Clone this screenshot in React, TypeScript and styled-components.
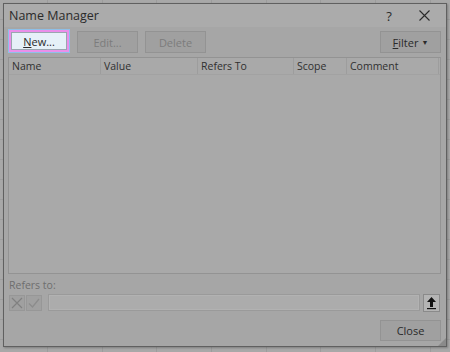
import React from "react";
import styled, { createGlobalStyle } from "styled-components";

const Global = createGlobalStyle`
  html, body { margin: 0; padding: 0; }
  body {
    width: 450px;
    height: 352px;
    overflow: hidden;
    font-family: "Open Sans", "Noto Sans", "Liberation Sans", sans-serif;
    background-color: #a8a8a8;
    background-image:
      repeating-linear-gradient(90deg, transparent 0 47px, #9c9c9c 47px 48px, transparent 48px 54.7px),
      repeating-linear-gradient(180deg, transparent 0 19px, #9e9e9e 19px 20px);
  }
`;

const Page = styled.div`
  width: 450px;
  height: 352px;
  box-sizing: border-box;
  padding: 3px 3px 5px 3px;
  display: flex;
`;

const Dialog = styled.div`
  flex: 1;
  position: relative;
  display: flex;
  flex-direction: column;
  background: #a6a6a6;
  border: 1px solid #606060;
  box-shadow: 1px 1px 2px rgba(0, 0, 0, 0.25);
`;

const TitleBar = styled.div`
  height: 23px;
  display: flex;
  align-items: center;
  padding-left: 5px;
  background: #ababab;
`;

const Title = styled.div`
  flex: 1;
  font-size: 12.5px;
  color: #2a2a2a;
`;

const TitleIcon = styled.div<{ $w: number }>`
  width: ${(p) => p.$w}px;
  display: flex;
  align-items: center;
  justify-content: center;
  color: #2a2a2a;
  font-size: 13px;
`;

const Body = styled.div`
  flex: 1;
  display: flex;
  flex-direction: column;
  padding: 2px 5px 5px 4px;
`;

const Toolbar = styled.div`
  display: flex;
  align-items: center;
  height: 24px;
  gap: 6px;
`;

const Button = styled.div<{ $focus?: boolean; $disabled?: boolean }>`
  box-sizing: border-box;
  width: ${(p) => (p.$focus ? 62 : 61)}px;
  height: ${(p) => (p.$focus ? 24 : 22)}px;
  display: flex;
  align-items: center;
  justify-content: center;
  font-size: 11px;
  color: ${(p) => (p.$disabled ? "#7c7c7c" : "#2a2a2a")};
  background: ${(p) => (p.$focus ? "#e6f0f8" : "#a0a0a0")};
  border: 1px solid ${(p) => (p.$focus ? "#8ec0e8" : "#939393")};
  outline: ${(p) => (p.$focus ? "2px solid #ea8fea" : "none")};
  outline-offset: ${(p) => (p.$focus ? "-3px" : "0")};
  box-shadow: ${(p) => (p.$focus ? "inset 0 0 0 2px #e6f0f8, inset 0 0 0 3px #9aa6b0" : "none")};
  margin-top: ${(p) => (p.$focus ? "0" : "2px")};
  margin-left: ${(p) => (p.$focus ? "0" : "1px")};
`;

const Spacer = styled.div`
  flex: 1;
`;

const Caret = styled.span`
  font-size: 7px;
  margin-left: 3px;
`;

const List = styled.div`
  margin-top: 4px;
  height: 217px;
  box-sizing: border-box;
  border: 1px solid #939393;
  background: #a9a9a9;
  display: flex;
  flex-direction: column;
`;

const HeaderRow = styled.div`
  display: grid;
  grid-template-columns: 92px 97px 96px 53px 1fr;
  height: 16px;
  border-bottom: 1px solid #a2a2a2;
`;

const HeaderCell = styled.div`
  font-size: 10.5px;
  color: #303030;
  display: flex;
  align-items: center;
  padding-left: 3px;
  border-right: 1px solid #9d9d9d;
  &:last-child { margin-right: 1px; }
`;

const RefLabel = styled.div`
  margin-top: 5px;
  font-size: 10.5px;
  color: #6e6e6e;
  padding-left: 1px;
  height: 13px;
  line-height: 13px;
`;

const RefRow = styled.div`
  margin-top: 1px;
  display: flex;
  align-items: center;
  height: 19px;
`;

const SmallBtn = styled.div`
  width: 14px;
  height: 14px;
  margin-left: 1px;
  background: #a0a0a0;
  border: 1px solid #979797;
  display: flex;
  align-items: center;
  justify-content: center;
`;

const RefInput = styled.div`
  flex: 1;
  height: 17px;
  box-sizing: border-box;
  margin-left: 6px;
  border: 1px solid #9a9a9a;
  background: #acacac;
  box-shadow: inset 0 0 0 1px #b2b2b2;
`;

const Collapse = styled.div`
  width: 17px;
  height: 18px;
  box-sizing: border-box;
  margin-left: 3px;
  margin-right: 1px;
  border: 1px solid #8a8a8a;
  background: #b4b4b4;
  display: flex;
  align-items: center;
  justify-content: center;
`;

const Footer = styled.div`
  margin-top: auto;
  display: flex;
  justify-content: flex-end;
`;

const CloseBtn = styled(Button)`
  height: 21px;
  margin-top: 0;
`;

const Grip = styled.svg`
  position: absolute;
  right: 0;
  bottom: 0;
`;

export default function App() {
  return (
    <>
      <Global />
      <Page>
        <Dialog>
          <TitleBar>
            <Title>Name Manager</Title>
            <TitleIcon $w={26}>?</TitleIcon>
            <TitleIcon $w={44}>
              <svg width="11" height="11" viewBox="0 0 11 11">
                <path d="M0.5 0.5 L10.5 10.5 M10.5 0.5 L0.5 10.5" stroke="#2a2a2a" strokeWidth="1.1" />
              </svg>
            </TitleIcon>
          </TitleBar>
          <Body>
            <Toolbar>
              <Button $focus>
                <span><u>N</u>ew...</span>
              </Button>
              <Button $disabled>Edit...</Button>
              <Button $disabled>Delete</Button>
              <Spacer />
              <Button>
                <u>F</u>ilter<Caret>▼</Caret>
              </Button>
            </Toolbar>
            <List>
              <HeaderRow>
                <HeaderCell>Name</HeaderCell>
                <HeaderCell>Value</HeaderCell>
                <HeaderCell>Refers To</HeaderCell>
                <HeaderCell>Scope</HeaderCell>
                <HeaderCell>Comment</HeaderCell>
              </HeaderRow>
            </List>
            <RefLabel>Refers to:</RefLabel>
            <RefRow>
              <SmallBtn>
                <svg width="12" height="12" viewBox="0 0 12 12">
                  <path d="M1 1 L11 11 M11 1 L1 11" stroke="#808080" strokeWidth="1.2" />
                </svg>
              </SmallBtn>
              <SmallBtn>
                <svg width="12" height="12" viewBox="0 0 12 12">
                  <path d="M1 6.5 L4.5 10 L11 2" stroke="#8c8c8c" strokeWidth="1.3" fill="none" />
                </svg>
              </SmallBtn>
              <RefInput />
              <Collapse>
                <svg width="11" height="14" viewBox="0 0 11 14">
                  <path d="M5.5 1 L1 6 L4 6 L4 11 L7 11 L7 6 L10 6 Z" fill="#111" />
                  <rect x="1" y="12" width="9" height="1.2" fill="#111" />
                </svg>
              </Collapse>
            </RefRow>
            <Footer>
              <CloseBtn>Close</CloseBtn>
            </Footer>
          </Body>
          <Grip width="8" height="8" viewBox="0 0 8 8">
            <path d="M8 0 L8 8 L0 8 Z" fill="#8a8a8a" />
          </Grip>
        </Dialog>
      </Page>
    </>
  );
}
